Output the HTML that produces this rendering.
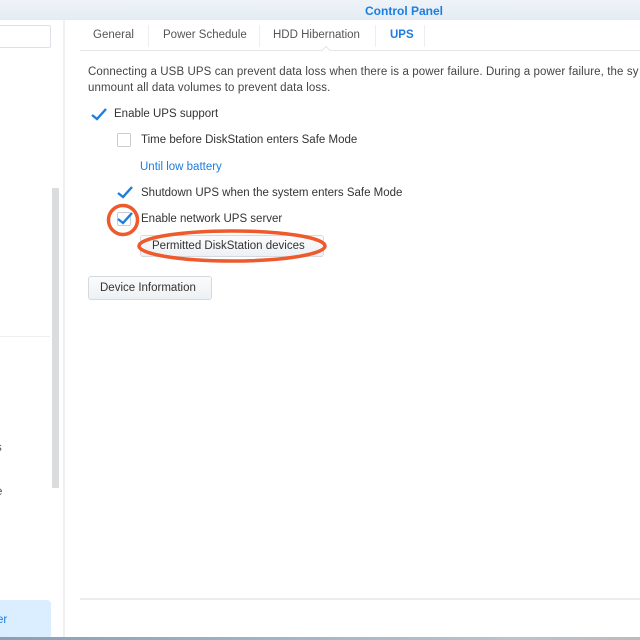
<!DOCTYPE html>
<html><head><meta charset="utf-8"><style>
*{margin:0;padding:0;box-sizing:border-box}
body{width:640px;height:640px;overflow:hidden;background:#fff;font-family:"Liberation Sans",sans-serif;font-size:11.5px;color:#333;position:relative}
.abs{position:absolute}
.title{left:0;top:0;width:640px;height:20px;background:linear-gradient(#eef3f8,#e4ecf3)}
.title span{position:absolute;left:365px;top:4px;font-weight:bold;color:#1c7ee0;font-size:12px}
.cb{position:absolute;width:14px;height:14px;border:1px solid #c9cdd2;border-radius:2px;background:#fff}
.t{position:absolute;white-space:nowrap}
.btn{position:absolute;border:1px solid #d6dadf;border-radius:3px;background:linear-gradient(#fafbfc,#eef1f4);white-space:nowrap}
</style></head><body>
<div class="abs title"><span>Control Panel</span></div>
<div class="abs" style="left:0;top:20px;width:64px;height:617px;background:#fff"></div>
<div class="abs" style="left:-2px;top:25px;width:53px;height:23px;border:1px solid #dde0e4;border-radius:2px;background:#fff"></div>
<div class="abs" style="left:52px;top:188px;width:7px;height:300px;background:#dadcde"></div>
<div class="abs" style="left:0;top:336px;width:50px;height:1px;background:#eceef0"></div>
<div class="t" style="left:-4px;top:442px;color:#555">s</div>
<div class="t" style="left:-4px;top:486px;color:#555">e</div>
<div class="abs" style="left:0;top:600px;width:51px;height:37px;background:#dbeeff;border-radius:0 4px 0 0"></div>
<div class="t" style="left:-3px;top:614px;color:#1c7ee0">er</div>
<div class="abs" style="left:63px;top:20px;width:2px;height:617px;background:#eef0f2"></div>
<div class="abs" style="left:80px;top:50px;width:560px;height:1px;background:#e3e6e9"></div>
<div class="t" style="left:93px;top:29px;color:#555">General</div>
<div class="abs" style="left:148px;top:25px;width:1px;height:22px;background:#eceef0"></div>
<div class="t" style="left:163px;top:29px;color:#555">Power Schedule</div>
<div class="abs" style="left:259px;top:25px;width:1px;height:22px;background:#eceef0"></div>
<div class="t" style="left:273px;top:29px;color:#555">HDD Hibernation</div>
<div class="abs" style="left:375px;top:25px;width:1px;height:22px;background:#eceef0"></div>
<div class="t" style="left:390px;top:29px;color:#1c7ee0;font-weight:bold">UPS</div>
<div class="abs" style="left:424px;top:25px;width:1px;height:22px;background:#eceef0"></div>
<div class="abs" style="left:323px;top:47px;width:6px;height:6px;background:#fff;border-left:1px solid #e3e6e9;border-top:1px solid #e3e6e9;transform:rotate(45deg)"></div>
<div class="t" style="left:88px;top:66px;color:#444;letter-spacing:0.1px">Connecting a USB UPS can prevent data loss when there is a power failure. During a power failure, the sy</div>
<div class="t" style="left:88px;top:82px;color:#444;letter-spacing:0.1px">unmount all data volumes to prevent data loss.</div>
<svg class="abs" style="left:90px;top:105px" width="18" height="18"><path d="M2 10 L7 14 L16 4" stroke="#1a7fe0" stroke-width="2.4" fill="none"/></svg>
<div class="t" style="left:114px;top:108px">Enable UPS support</div>
<div class="cb" style="left:117px;top:133px"></div>
<div class="t" style="left:141px;top:134px">Time before DiskStation enters Safe Mode</div>
<div class="t" style="left:140px;top:161px;color:#1c7ee0">Until low battery</div>
<svg class="abs" style="left:116px;top:183px" width="18" height="18"><path d="M2 10 L7 14 L16 4" stroke="#1a7fe0" stroke-width="2.4" fill="none"/></svg>
<div class="t" style="left:141px;top:187px">Shutdown UPS when the system enters Safe Mode</div>
<div class="cb" style="left:117px;top:212px"></div>
<svg class="abs" style="left:116px;top:209px" width="18" height="18"><path d="M2 10 L7 14 L16 4" stroke="#1a7fe0" stroke-width="2.4" fill="none"/></svg>
<div class="t" style="left:141px;top:213px">Enable network UPS server</div>
<div class="btn" style="left:140px;top:235px;width:184px;height:22px"></div>
<div class="t" style="left:152px;top:240px">Permitted DiskStation devices</div>
<div class="btn" style="left:88px;top:276px;width:124px;height:24px"></div>
<div class="t" style="left:100px;top:282px">Device Information</div>
<svg class="abs" style="left:0;top:0" width="640" height="640">
<circle cx="123" cy="220" r="14.5" fill="none" stroke="#ee5a2c" stroke-width="3.5"/>
<ellipse cx="232" cy="246" rx="93" ry="15" fill="none" stroke="#ee5a2c" stroke-width="3.5"/>
</svg>
<div class="abs" style="left:80px;top:598px;width:560px;height:2px;background:#eaecee"></div>
<div class="abs" style="left:0;top:637px;width:640px;height:3px;background:linear-gradient(90deg,#8aa0b5,#9fb3c4 40%,#b9c4cc 80%,#bbb)"></div>
</body></html>
